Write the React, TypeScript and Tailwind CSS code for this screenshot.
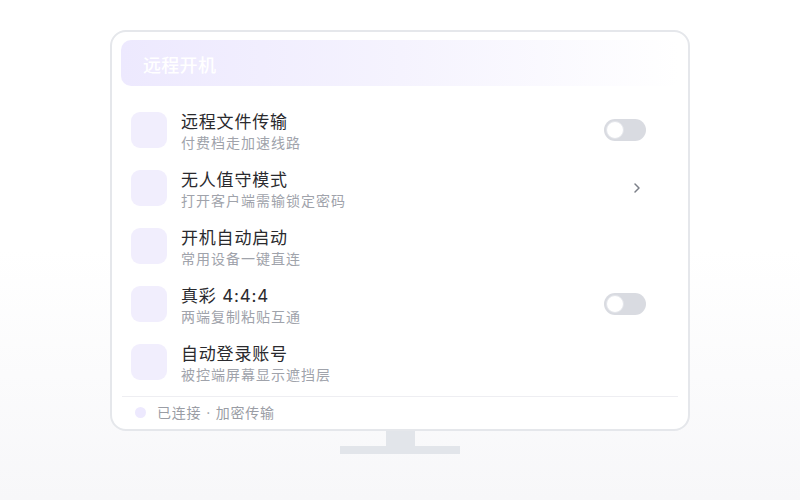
import React from "react";

type Row = { title: string; sub: string; right: "toggle" | "chevron" | null };

const rows: Row[] = [
  { title: "远程文件传输", sub: "付费档走加速线路", right: "toggle" },
  { title: "无人值守模式", sub: "打开客户端需输锁定密码", right: "chevron" },
  { title: "开机自动启动", sub: "常用设备一键直连", right: null },
  { title: "真彩 4:4:4", sub: "两端复制粘贴互通", right: "toggle" },
  { title: "自动登录账号", sub: "被控端屏幕显示遮挡层", right: null },
];

function Toggle() {
  return (
    <div className="w-[42px] h-[22px] rounded-full bg-[#d9dbe1] flex items-center px-[2px]">
      <div className="w-[18px] h-[18px] rounded-full bg-white border border-[#e3e5ea]" />
    </div>
  );
}

export default function App() {
  return (
    <div
      className="w-full h-[500px] bg-gradient-to-b from-white via-white to-[#f7f7f9] flex flex-col items-center pt-[30px]"
      style={{ fontFamily: 'Inter, "Noto Sans CJK SC", sans-serif' }}
    >
      <div className="w-[580px] h-[401px] border-2 border-[#e5e7eb] rounded-[16px] bg-white px-[9px] pt-[8px] flex flex-col">
        <div className="h-[46px] rounded-[10px] bg-gradient-to-r from-[#ede9fe] via-[#f5f3fe] to-white flex items-center px-[22px] pt-[5px]">
          <span className="text-white text-[18px] font-medium tracking-[0.3px]">远程开机</span>
        </div>
        <div className="mt-[17px] px-[10px] flex flex-col">
          {rows.map((r) => (
            <div key={r.title} className="h-[58px] pt-[8px] flex items-start">
              <div className="w-[36px] h-[36px] mt-[1px] rounded-[9px] bg-[#f1eefd] shrink-0" />
              <div className="ml-[14px] flex flex-col flex-1">
                <span className="text-[17px] leading-[22px] text-[#2a2a2e] tracking-[0.8px]">{r.title}</span>
                <span className="text-[14px] leading-[20px] text-[#a0a3ab] tracking-[1px]">{r.sub}</span>
              </div>
              <div className="w-[42px] h-[36px] mt-[1px] mr-[23px] flex items-center justify-end">
                {r.right === "toggle" && <Toggle />}
                {r.right === "chevron" && (
                  <svg width="8" height="12" viewBox="0 0 8 12" className="mr-[5px]">
                    <path d="M2 2l4 4-4 4" fill="none" stroke="#7b7f88" strokeWidth="1.5" strokeLinecap="round" strokeLinejoin="round" />
                  </svg>
                )}
              </div>
            </div>
          ))}
        </div>
        <div className="mt-[3px] mx-[1px] border-t border-[#eeeef2]" />
        <div className="flex-1 flex items-center pl-[14px] pb-[1px]">
          <div className="w-[11px] h-[11px] rounded-full bg-[#ede9fe]" />
          <span className="ml-[11px] text-[14px] text-[#9a9da5] tracking-[0.8px]">已连接 · 加密传输</span>
        </div>
      </div>
      <div className="w-[29px] h-[15px] bg-[#e2e5ea]" />
      <div className="w-[120px] h-[8px] bg-[#e2e5ea]" />
    </div>
  );
}
